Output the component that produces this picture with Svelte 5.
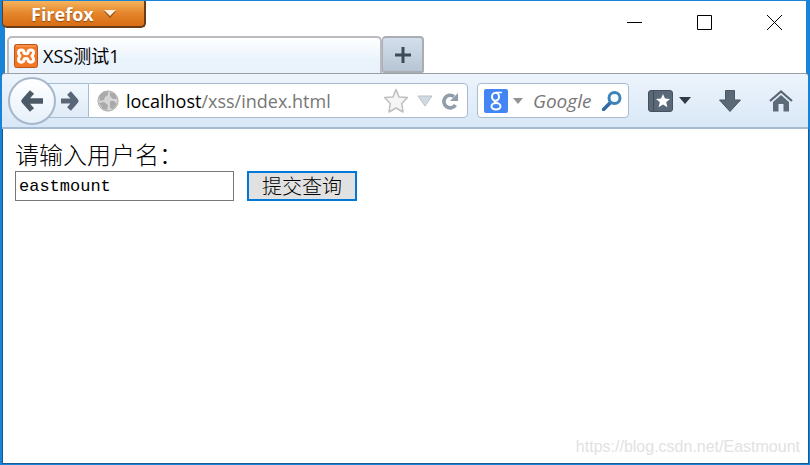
<script>
  let username = $state('eastmount');
  let query = $state('');
</script>

<div class="window">
  <header class="titlebar">
    <div class="caption">
      <button class="app-menu" type="button">Firefox
        <svg width="12" height="8" viewBox="0 0 12 8" aria-hidden="true"><path d="M0 1h12L6 8z" fill="#8e4a10" /><path d="M0 0h12L6 6z" fill="#fff3df" /></svg>
      </button>
      <div class="controls">
        <button type="button" aria-label="Minimize"><svg width="16" height="16" viewBox="0 0 16 16"><path d="M0 7.5h15" stroke="#000" /></svg></button>
        <button type="button" aria-label="Maximize"><svg width="16" height="16" viewBox="0 0 16 16"><path d="M.5.5h14v14H.5z" fill="none" stroke="#000" /></svg></button>
        <button type="button" aria-label="Close"><svg width="16" height="16" viewBox="0 0 16 16"><path d="M0 0l15 15M15 0L0 15" fill="none" stroke="#000" /></svg></button>
      </div>
    </div>
    <div class="tabs">
      <button class="tab" type="button">
        <svg width="24" height="24" viewBox="0 0 24 24" aria-hidden="true">
          <rect x=".5" y=".5" width="23" height="23" rx="2" fill="#f37623" stroke="#b9541b" />
          <path d="M2 2h20" stroke="#f9a873" />
          <path d="M10 9.500V8.500C10 5 4.500 5 4.500 8.500c0 2 1 2.500 1.500 3.500-.5 1-1.500 1.500-1.500 3.500 0 3.500 5.500 3.500 5.500 0 0-1.500 4-1.500 4 0 0 3.500 5.500 3.500 5.500 0 0-2-1-2.500-1.500-3.500.5-1 1.500-1.500 1.500-3.500C19.500 5 14 5 14 8.500c0 1.500-4 1.500-4 0" fill="none" stroke="#fff" stroke-width="3" stroke-linejoin="round" />
        </svg>
        <span>XSS测试1</span>
      </button>
      <button class="new-tab" type="button" aria-label="New tab"><svg width="16" height="16" viewBox="0 0 16 16"><path d="M8 0v16M0 8h16" stroke="#3c4b5a" stroke-width="3" /></svg></button>
    </div>
  </header>

  <nav class="toolbar">
    <button class="back" type="button" aria-label="Back"><svg width="24" height="24" viewBox="0 0 24 24"><path d="M12 3L4 12l8 9M5 12h18" fill="none" stroke="#4c5967" stroke-width="5.500" stroke-linejoin="round" /></svg></button>
    <button class="forward" type="button" aria-label="Forward"><svg width="20" height="22" viewBox="0 0 20 22"><path d="M9 3l7 8-7 8M15 11H1" fill="none" stroke="#586675" stroke-width="5" stroke-linejoin="round" /></svg></button>
    <div class="address">
      <svg width="22" height="22" viewBox="0 0 22 22" aria-hidden="true"><circle cx="11" cy="11" r="10.500" fill="#d6d6d6" /><path d="M2 6l4-4 5-1 0 4-3 2-1 3-4 1zM13 2l5 2 2 5-4 0-3-3zM2 13l5-1 4 3-1 5-4-1zM13 11l4 0 3 3-4 5-3-1z" fill="#aaa" /><circle cx="11" cy="11" r="10" fill="none" stroke="#b0b0b0" /></svg>
      <a href="#page"><span>localhost</span>/xss/index.html</a>
      <div class="address-tools">
        <button type="button" aria-label="Bookmark"><svg width="26" height="26" viewBox="0 0 26 26"><path d="M13 1.500l3 7.500 8.500.5-5.700 6 1.200 8.500-7-4-7 4 1.200-8.500-5.700-6L10 9z" fill="#f5f5f5" stroke="#bebebe" stroke-width="1.500" stroke-linejoin="round" /></svg></button>
        <button type="button" aria-label="History"><svg width="16" height="12" viewBox="0 0 16 12"><path d="M1 1h14L8 11z" fill="#d2d9e0" stroke="#b7c1cb" /></svg></button>
        <button type="button" aria-label="Reload"><svg width="18" height="18" viewBox="0 0 18 18"><path d="M14.500 13A6.300 6.300 0 1 1 13 4.500" fill="none" stroke="#929dab" stroke-width="3.600" /><path d="M17 1v8H9z" fill="#929dab" /></svg></button>
      </div>
    </div>
    <div class="search">
      <button type="button" aria-label="Search engine">
        <svg width="24" height="24" viewBox="0 0 24 24"><rect width="24" height="24" rx="2" fill="#4285f4" /><g fill="none" stroke="#fff"><ellipse cx="11.500" cy="7.800" rx="3.500" ry="4" stroke-width="2" /><path d="M12 3.500h6M13.500 11c-3 1-4 2-1.500 3.500" stroke-width="1.500" /><ellipse cx="12" cy="17.300" rx="4.500" ry="3.200" stroke-width="2" /></g></svg>
        <svg width="10" height="6" viewBox="0 0 10 6"><path d="M0 0h10L5 6z" fill="#939393" /></svg>
      </button>
      <input type="text" aria-label="Search the web" placeholder="Google" bind:value={query} />
      <button type="button" aria-label="Search"><svg width="20" height="20" viewBox="0 0 20 20"><path d="M1.500 18.500L8 12" stroke="#326ca5" stroke-width="3.600" stroke-linecap="round" /><circle cx="12.500" cy="7" r="5.500" fill="#f5fbff" stroke="#3e82b8" stroke-width="3" /></svg></button>
    </div>
    <div class="actions">
      <button type="button" aria-label="Bookmarks">
        <svg width="25" height="22" viewBox="0 0 25 22"><rect x=".5" y=".5" width="24" height="21" rx="2.500" fill="#5a6877" stroke="#45515e" /><path d="M5.500 1v20" stroke="#3f4b58" /><path d="M15 4l2 4.500 5 .5-3.800 3.200 1.200 5L15 14.500l-4.400 2.700 1.200-5L8 9l5-.5z" fill="#fff" /></svg>
        <svg width="12" height="7" viewBox="0 0 12 7"><path d="M0 0h12L6 7z" fill="#303a45" /></svg>
      </button>
      <button type="button" aria-label="Downloads"><svg width="22" height="22" viewBox="0 0 22 22"><path d="M6.500.5h9V10h6L11 21.500.5 10h6z" fill="#5a6877" stroke="#4b5866" /></svg></button>
      <button type="button" aria-label="Home"><svg width="24" height="22" viewBox="0 0 24 22"><path d="M4 12L12 5l8 7v9.500h-5.500V14h-5v7.500H4z" fill="#5d6b79" /><path d="M1 11L12 1.500 23 11" fill="none" stroke="#596674" stroke-width="2.200" /></svg></button>
    </div>
  </nav>

  <main id="page">
    <form onsubmit={(event) => event.preventDefault()}>
      <label for="username">请输入用户名：</label>
      <div class="fields">
        <input id="username" type="text" bind:value={username} />
        <button type="submit">提交查询</button>
      </div>
    </form>
    <footer>https://blog.csdn.net/Eastmount</footer>
  </main>
</div>

<style>
  * { box-sizing: border-box; }
  svg { display: block; flex: none; }
  button { margin: 0; padding: 0; border: 0; background: none; color: inherit; font: inherit; }
  input { min-width: 0; margin: 0; border-radius: 0; outline: 0; }

  .window {
    display: flex;
    flex-direction: column;
    min-height: 100vh;
    padding: 1px 1px 1px 2px;
    background: #1883d7;
    font-family: "Open Sans", "Noto Sans CJK SC", sans-serif;
    font-size: 18px;
  }
  .titlebar {
    background: linear-gradient(90deg, #1883d7 3px, #fff 3px, #fff calc(100% - 3px), #1883d7 calc(100% - 3px));
  }
  .caption { display: flex; align-items: flex-start; justify-content: space-between; height: 35px; }
  .app-menu {
    display: flex;
    align-items: center;
    gap: 10px;
    height: 27px;
    padding: 0 28px 0 28px;
    border: solid #6b3b16;
    border-width: 0 2px 2px 1px;
    border-radius: 0 0 5px 5px;
    background: linear-gradient(#f5b35d, #e5852b 50%, #d86c14);
    color: #fff;
    font-size: 18px;
    font-weight: 700;
    line-height: 24px;
    text-shadow: 0 1px 1px #8e4a10;
  }
  .controls { display: flex; gap: 54px; padding: 14px 26px 0 0; }
  .tabs { display: flex; padding-left: 5px; }
  .tab {
    display: flex;
    align-items: center;
    gap: 5px;
    width: 375px;
    height: 37px;
    padding-left: 5px;
    border: 2px solid #b9bbbe;
    border-bottom: 0;
    border-radius: 5px 5px 0 0;
    background: linear-gradient(#fff, #eaf3fc 60%);
    line-height: 24px;
    text-align: left;
  }
  .new-tab {
    display: grid;
    place-items: center;
    width: 42px;
    height: 37px;
    border: 2px solid #a9aeb5;
    border-left-width: 1px;
    border-radius: 4px 4px 2px 2px;
    background: linear-gradient(#d3dfeb, #b7c5d4);
  }

  .toolbar {
    display: flex;
    align-items: center;
    height: 56px;
    margin-right: 1px;
    padding: 0 15px 0 6px;
    border-top: 1px solid #9a9fa5;
    border-bottom: 2px solid #a5bbd1;
    border-radius: 3px 3px 0 0;
    background: linear-gradient(#edf4fc, #d9e8f7);
  }
  .back {
    display: grid;
    flex: none;
    place-items: center;
    z-index: 1;
    width: 48px;
    height: 48px;
    border: 2px solid #a5b7ca;
    border-radius: 50%;
    background: linear-gradient(#fff, #e6f0fa);
  }
  .forward {
    display: grid;
    place-items: center end;
    flex: none;
    width: 40px;
    height: 35px;
    margin-left: -8px;
    padding-right: 8px;
    border: solid #a9bbce;
    border-width: 1px 0;
    background: linear-gradient(#f1f7fd, #e0ebf7);
  }
  .address, .search {
    display: flex;
    align-items: center;
    height: 35px;
    border: 1px solid #a9bbce;
    background: #fff;
  }
  .address { flex: 1; gap: 7px; min-width: 0; padding: 0 8px; border-radius: 0 4px 4px 0; }
  .address a { overflow: hidden; color: #777; text-decoration: none; white-space: nowrap; }
  .address a span { color: #000; }
  .address-tools { display: flex; align-items: center; gap: 8px; margin-left: auto; }
  .search { gap: 8px; width: 152px; margin-left: 9px; padding: 0 6px; border-radius: 4px; }
  .search button { display: flex; align-items: center; gap: 5px; }
  .search input { flex: 1; width: 0; padding: 0 0 0 2px; border: 0; background: none; font: italic 19px "Open Sans", sans-serif; }
  .search input::placeholder { color: #777; opacity: 1; }
  .actions { display: flex; align-items: center; gap: 28px; margin-left: 19px; }
  .actions button { display: flex; align-items: center; gap: 6px; }

  main {
    display: flex;
    flex: 1;
    flex-direction: column;
    justify-content: space-between;
    padding: 8px 8px 4px 12px;
    border: solid #145b96;
    border-width: 0 1px 1px;
    background: #fff;
    font-family: "Noto Sans CJK SC", sans-serif;
  }
  label { display: block; font-size: 24px; font-weight: 300; line-height: 34px; }
  .fields { display: flex; gap: 13px; }
  .fields input {
    width: 219px;
    height: 30px;
    padding: 0 3px;
    border: 1px solid #777;
    font: 17px "Liberation Mono", monospace;
  }
  .fields button {
    width: 110px;
    height: 30px;
    border: 2px solid #0078d7;
    background: #e1e1e1;
    font-size: 20px;
    font-weight: 300;
    line-height: 24px;
  }
  footer { color: #e2e2e2; font: 16px/24px "Liberation Sans", sans-serif; text-align: right; }
</style>
